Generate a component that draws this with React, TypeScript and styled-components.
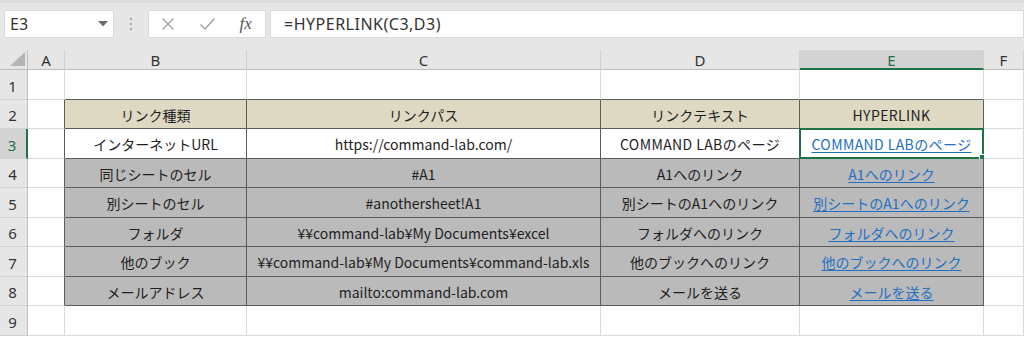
import React from "react";
import styled, { createGlobalStyle, css } from "styled-components";

const GlobalStyle = createGlobalStyle`
  * { box-sizing: border-box; }
  body {
    margin: 0;
    background: #ffffff;
    font-family: "Noto Sans", "Noto Sans CJK JP", sans-serif;
    color: #262626;
  }
`;

const GREEN = "#217346";
const GRID = "#dadada";
const DARK = "#5c5c5c";
const HEAD_LINE = "#bdbdbd";

const Page = styled.div`
  width: 1024px;
  height: 337px;
  overflow: hidden;
  background: #fff;
`;

const Bar = styled.div`
  height: 50px;
  background: #e6e6e6;
  border-top: 3px solid #dcdcdc;
  display: flex;
  align-items: flex-start;
  padding: 7px 0 0 4px;
`;

const Box = styled.div`
  height: 28px;
  background: #ffffff;
  border: 1px solid #d9d9d9;
  display: flex;
  align-items: center;
`;

const NameBox = styled(Box)`
  width: 110px;
  justify-content: space-between;
  padding: 0 5px 0 5px;
  font-size: 16px;
  color: #333;
`;

const Dots = styled.div`
  width: 34px;
  height: 28px;
  display: flex;
  align-items: center;
  justify-content: center;
`;

const FxBox = styled(Box)`
  width: 118px;
`;

const FxIcon = styled.span`
  width: 39px;
  display: flex;
  align-items: center;
  justify-content: center;
  color: #9a9a9a;
`;

const FxText = styled.span`
  font-family: "Liberation Serif", "DejaVu Serif", serif;
  font-style: italic;
  font-size: 17px;
  color: #555;
  width: 39px;
  text-align: center;
`;

const FormulaBox = styled(Box)`
  flex: 1;
  margin-left: 4px;
  padding-left: 13px;
  font-size: 16px;
  color: #333;
  letter-spacing: 0.5px;
`;

const Sheet = styled.div`
  display: grid;
  grid-template-columns: 28px 37px 182px 354px 199px 184px 40px;
  grid-template-rows: 20px 30px 29px 30px 29px 30px 29px 30px 29px 30px;
`;

const Corner = styled.div`
  background: #e6e6e6;
  border-right: 1px solid ${HEAD_LINE};
  border-bottom: 1px solid ${HEAD_LINE};
  position: relative;
  &::after {
    content: "";
    position: absolute;
    right: 2px;
    bottom: 3px;
    width: 0;
    height: 0;
    border-left: 15px solid transparent;
    border-bottom: 14px solid #b5b5b5;
  }
`;

const ColHead = styled.div<{ $sel?: boolean }>`
  background: ${(p) => (p.$sel ? "#d3d3d3" : "#e6e6e6")};
  border-right: 1px solid #d0d0d0;
  border-bottom: ${(p) => (p.$sel ? `2px solid ${GREEN}` : `1px solid ${HEAD_LINE}`)};
  color: ${(p) => (p.$sel ? GREEN : "#333")};
  font-size: 15px;
  display: flex;
  align-items: center;
  justify-content: center;
  padding-top: ${(p) => (p.$sel ? "1px" : "0")};
`;

const RowHead = styled.div<{ $sel?: boolean }>`
  background: ${(p) => (p.$sel ? "#d3d3d3" : "#e6e6e6")};
  border-right: ${(p) => (p.$sel ? `2px solid ${GREEN}` : `1px solid ${HEAD_LINE}`)};
  border-bottom: 1px solid #d0d0d0;
  color: ${(p) => (p.$sel ? GREEN : "#333")};
  font-size: 15px;
  display: flex;
  align-items: flex-end;
  justify-content: center;
  padding: 0 2px 3px 0;
`;

type Fill = "none" | "tan" | "white" | "gray";
const fills: Record<Fill, string> = {
  none: "#ffffff",
  tan: "#ddd9c3",
  white: "#ffffff",
  gray: "#bababa",
};

const Cell = styled.div<{ $fill: Fill; $right: boolean; $bottom: boolean; $sel?: boolean }>`
  position: relative;
  background: ${(p) => fills[p.$fill]};
  border-right: 1px solid ${(p) => (p.$right ? DARK : GRID)};
  border-bottom: 1px solid ${(p) => (p.$bottom ? DARK : GRID)};
  font-family: "Noto Sans CJK JP", "Noto Sans", sans-serif;
  font-size: 14px;
  color: #1e1e1e;
  display: flex;
  align-items: center;
  justify-content: center;
  white-space: nowrap;
  padding-top: 1px;
  ${(p) =>
    p.$sel &&
    css`
      &::before {
        content: "";
        position: absolute;
        left: -1px;
        top: -1px;
        right: -1px;
        bottom: -1px;
        border: 2px solid ${GREEN};
        pointer-events: none;
      }
      &::after {
        content: "";
        position: absolute;
        right: -4px;
        bottom: -4px;
        width: 6px;
        height: 6px;
        background: ${GREEN};
        border: 1px solid #fff;
      }
    `}
`;

const Wide = styled.span`
  letter-spacing: 0.4px;
`;

const Link = styled.span`
  color: #2270c2;
  text-decoration: underline;
  text-underline-offset: 2px;
`;

const tableRows: string[][] = [
  ["リンク種類", "リンクパス", "リンクテキスト", "HYPERLINK"],
  ["インターネットURL", "https://command-lab.com/", "COMMAND LABのページ", "COMMAND LABのページ"],
  ["同じシートのセル", "#A1", "A1へのリンク", "A1へのリンク"],
  ["別シートのセル", "#anothersheet!A1", "別シートのA1へのリンク", "別シートのA1へのリンク"],
  ["フォルダ", "¥¥command-lab¥My Documents¥excel", "フォルダへのリンク", "フォルダへのリンク"],
  ["他のブック", "¥¥command-lab¥My Documents¥command-lab.xls", "他のブックへのリンク", "他のブックへのリンク"],
  ["メールアドレス", "mailto:command-lab.com", "メールを送る", "メールを送る"],
];

const COLS = ["A", "B", "C", "D", "E", "F"];

const inTable = (r: number, c: number) => r >= 2 && r <= 8 && c >= 1 && c <= 4;

const fillFor = (r: number, c: number): Fill => {
  if (!inTable(r, c)) return "none";
  if (r === 2) return "tan";
  if (r === 3) return "white";
  return "gray";
};

const cellText = (r: number, c: number): React.ReactNode => {
  if (!inTable(r, c)) return null;
  const t = tableRows[r - 2][c - 1];
  const isCaps = t.startsWith("COMMAND") || t === "HYPERLINK";
  const content = isCaps ? <Wide>{t}</Wide> : t;
  if (c === 4 && r >= 3) return <Link>{content}</Link>;
  return content;
};

const DownArrow = () => (
  <svg width="10" height="6" viewBox="0 0 10 6">
    <path d="M0 0 L10 0 L5 5.5 Z" fill="#6b6b6b" />
  </svg>
);

const VDots = () => (
  <svg width="4" height="14" viewBox="0 0 4 14">
    <circle cx="2" cy="2" r="1.2" fill="#a8a8a8" />
    <circle cx="2" cy="7" r="1.2" fill="#a8a8a8" />
    <circle cx="2" cy="12" r="1.2" fill="#a8a8a8" />
  </svg>
);

const Cross = () => (
  <svg width="14" height="14" viewBox="0 0 14 14">
    <path d="M1.5 1.5 L12.5 12.5 M12.5 1.5 L1.5 12.5" stroke="#9f9f9f" strokeWidth="1.3" fill="none" />
  </svg>
);

const Check = () => (
  <svg width="17" height="14" viewBox="0 0 17 14">
    <path d="M1.5 7.5 L6 12 L15.5 1.5" stroke="#9f9f9f" strokeWidth="1.4" fill="none" />
  </svg>
);

export default function App() {
  const rows = [1, 2, 3, 4, 5, 6, 7, 8, 9];
  return (
    <Page>
      <GlobalStyle />
      <Bar>
        <NameBox>
          <span>E3</span>
          <DownArrow />
        </NameBox>
        <Dots>
          <VDots />
        </Dots>
        <FxBox>
          <FxIcon>
            <Cross />
          </FxIcon>
          <FxIcon>
            <Check />
          </FxIcon>
          <FxText>fx</FxText>
        </FxBox>
        <FormulaBox>=HYPERLINK(C3,D3)</FormulaBox>
      </Bar>
      <Sheet>
        <Corner />
        {COLS.map((c) => (
          <ColHead key={c} $sel={c === "E"}>
            {c}
          </ColHead>
        ))}
        {rows.map((r) => (
          <React.Fragment key={r}>
            <RowHead $sel={r === 3}>{r}</RowHead>
            {COLS.map((_, c) => {
              const right = inTable(r, c) || inTable(r, c + 1);
              const bottom = inTable(r, c) || inTable(r + 1, c);
              return (
                <Cell
                  key={c}
                  $fill={fillFor(r, c)}
                  $right={right}
                  $bottom={bottom}
                  $sel={r === 3 && c === 4}
                >
                  {cellText(r, c)}
                </Cell>
              );
            })}
          </React.Fragment>
        ))}
      </Sheet>
    </Page>
  );
}
